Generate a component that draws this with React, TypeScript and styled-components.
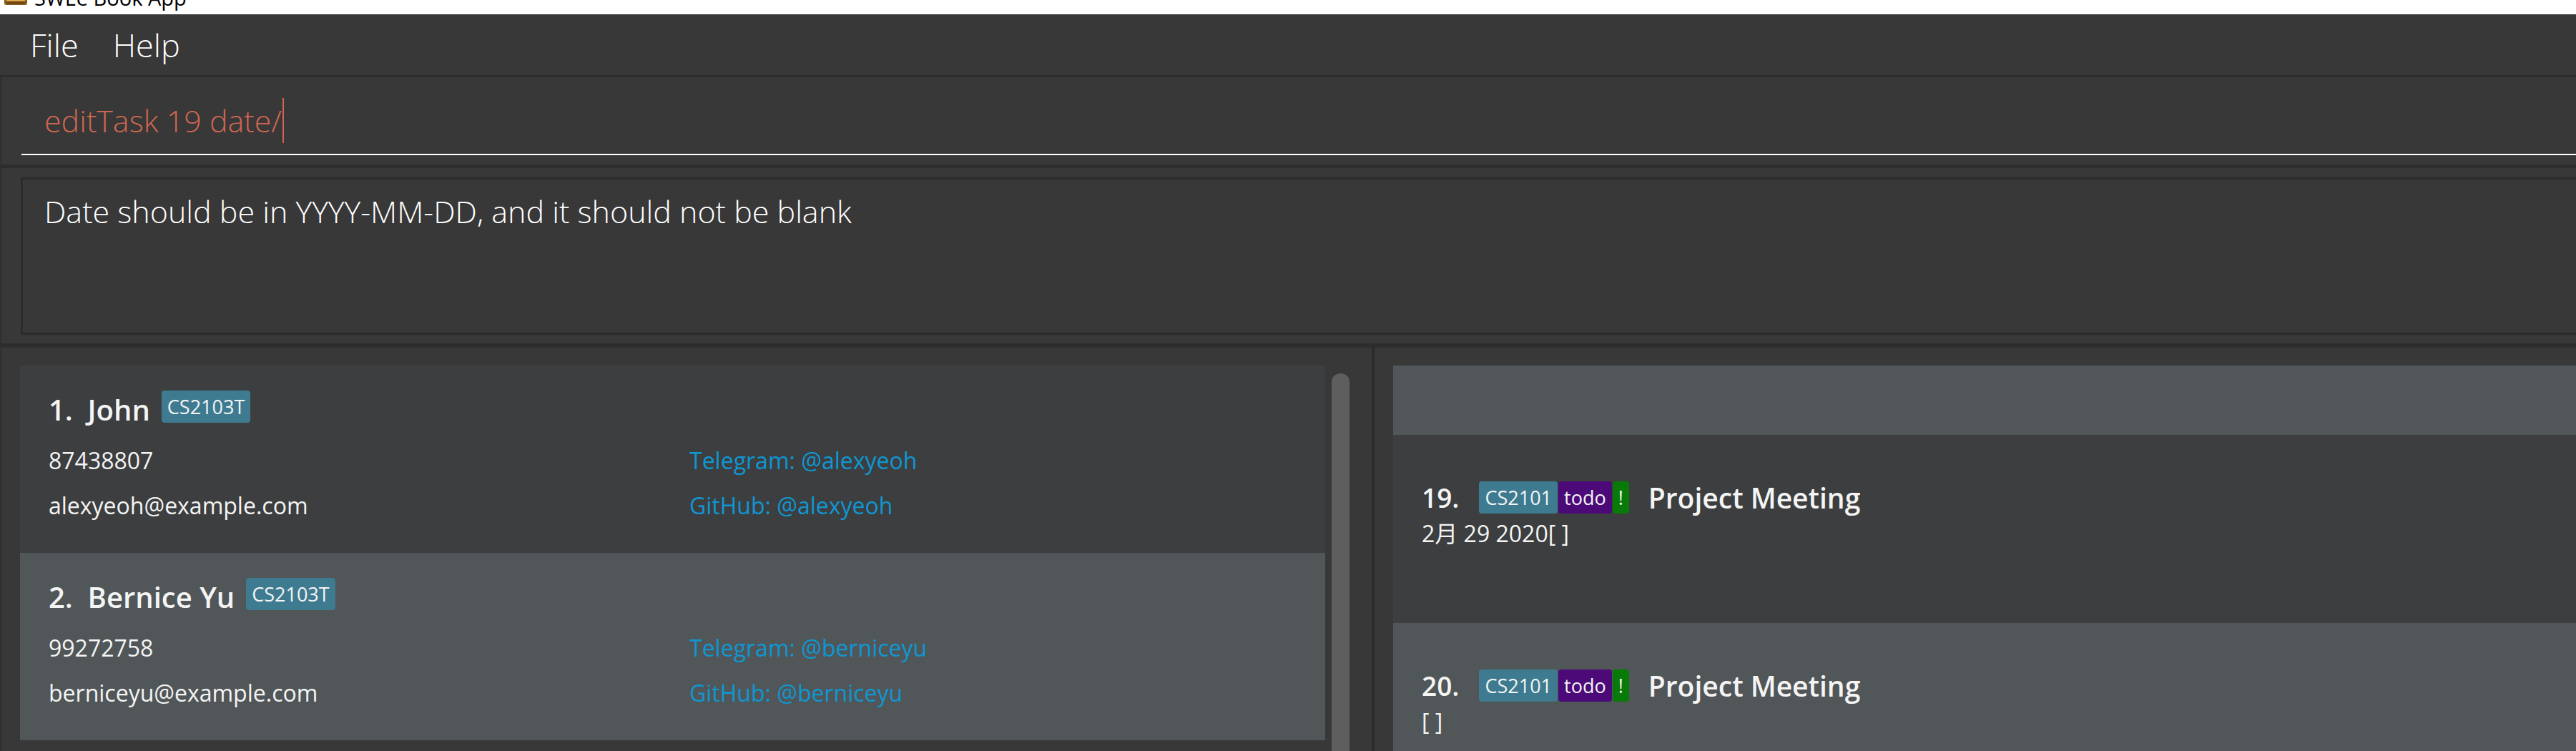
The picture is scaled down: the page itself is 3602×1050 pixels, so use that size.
import React from "react";
import styled, { createGlobalStyle } from "styled-components";

const GlobalStyle = createGlobalStyle`
  html, body { margin: 0; padding: 0; }
  body {
    background: #383838;
    font-family: "Open Sans", "Noto Sans", "Noto Sans CJK SC", sans-serif;
    overflow: hidden;
  }
  * { box-sizing: border-box; }
`;

const Window = styled.div`
  width: 3602px;
  height: 1050px;
  display: flex;
  flex-direction: column;
  background: #383838;
  overflow: hidden;
`;

const TitleBar = styled.header`
  flex: 0 0 20px;
  background: #ffffff;
  display: flex;
  align-items: flex-start;
  gap: 9px;
  padding-left: 5px;
  overflow: hidden;
`;

const AppIcon = styled.svg`
  flex: 0 0 34px;
  margin-top: -26px;
`;

const WindowTitle = styled.span`
  font-family: "Open Sans", "Noto Sans", sans-serif;
  font-size: 29px;
  line-height: 30px;
  margin-top: -18px;
  color: #000;
  white-space: nowrap;
`;

const MenuBar = styled.nav`
  flex: 0 0 85px;
  display: flex;
  align-items: center;
  gap: 48px;
  padding-left: 42px;
  background: #383838;
`;

const MenuItem = styled.span`
  font-weight: 300;
  font-size: 45px;
  color: #ffffff;
`;

const Rule = styled.div<{ $h: number }>`
  flex: 0 0 ${(p) => p.$h}px;
  background: #2d2d2d;
`;

const CommandPane = styled.section`
  flex: 0 0 122px;
  padding: 29px 0 0 27px;
  border-left: 3px solid #313131;
`;

const CommandField = styled.div`
  display: flex;
  align-items: center;
  padding: 0 0 15px 32px;
  border-bottom: 2px solid #ffffff;
`;

const CommandText = styled.span`
  font-weight: 300;
  font-size: 43px;
  line-height: 63px;
  color: #d06651;
  white-space: pre;
`;

const Caret = styled.span`
  width: 2px;
  height: 63px;
  margin-left: 1px;
  background: #d06651;
`;

const ResultPane = styled.section`
  flex: 0 0 245px;
  padding: 13px 0 12px 26px;
  border-left: 3px solid #313131;
`;

const ResultBox = styled.div`
  height: 220px;
  border: 3px solid #2b2b2b;
  border-right: none;
  padding: 18px 0 0 30px;
  font-weight: 300;
  font-size: 43px;
  line-height: 54px;
  color: #ffffff;
`;

const Lists = styled.main`
  flex: 1;
  display: flex;
  min-height: 0;
`;

const LeftPanel = styled.section`
  flex: 0 0 1918px;
  display: flex;
  gap: 9px;
  padding: 25px 31px 0 25px;
  border-left: 3px solid #313131;
`;

const CardList = styled.div`
  flex: 0 0 1825px;
  display: flex;
  flex-direction: column;
`;

const PersonCard = styled.article<{ $odd: boolean }>`
  flex: 0 0 262px;
  background: ${(p) => (p.$odd ? "#515658" : "#3c3e3f")};
  padding: 32px 0 0 40px;
  display: flex;
  flex-direction: column;
`;

const NameRow = styled.div`
  display: flex;
  align-items: center;
  height: 58px;
`;

const BigLabel = styled.span<{ $size: number }>`
  font-weight: 600;
  font-size: ${(p) => p.$size}px;
  color: #f4f4f4;
  white-space: pre;
`;

const Tag = styled.span<{ $kind: "module" | "status" | "priority" }>`
  display: inline-flex;
  align-items: center;
  height: 45px;
  padding: 0 8px;
  border-radius: 4px;
  font-size: 27px;
  color: #f4f4f4;
  background: ${(p) =>
    p.$kind === "module" ? "#3e7b91" : p.$kind === "status" ? "#4b0a78" : "#077a07"};
`;

const PersonTag = styled(Tag)`
  margin-left: 16px;
  margin-top: -7px;
`;

const Details = styled.div`
  display: grid;
  grid-template-columns: 896px auto;
  margin-top: 11px;
  font-size: 32px;
  line-height: 63px;
`;

const Field = styled.span`
  color: #f4f4f4;
`;

const Link = styled.span`
  color: #0f97d3;
`;

const ScrollThumb = styled.div`
  flex: 0 0 25px;
  margin-top: 11px;
  border-radius: 12px 12px 0 0;
  background: #5e5e5e;
`;

const VDivider = styled.div`
  flex: 0 0 4px;
  background: #2b2b2b;
`;

const RightPanel = styled.section`
  flex: 1;
  min-width: 0;
  display: flex;
  flex-direction: column;
  padding: 25px 0 0 26px;
`;

const TaskViewport = styled.div`
  flex: 1;
  overflow: hidden;
`;

const TaskList = styled.div<{ $scroll: number }>`
  display: flex;
  flex-direction: column;
  margin-top: -${(p) => p.$scroll}px;
`;

const TaskCard = styled.article<{ $odd: boolean }>`
  flex: 0 0 263px;
  height: 263px;
  background: ${(p) => (p.$odd ? "#515658" : "#3c3e3f")};
  padding: 62px 0 0 40px;
`;

const TitleRow = styled.div`
  display: flex;
  align-items: center;
  height: 50px;
`;

const TagGroup = styled.div`
  display: flex;
  gap: 1px;
  margin: 0 27px 0 28px;
`;

const DateRow = styled.div`
  margin-top: 3px;
  font-size: 32px;
  line-height: 45px;
  color: #f4f4f4;
  white-space: pre;
  font-family: "Open Sans", "Noto Sans CJK SC", sans-serif;
`;

const persons = [
  { name: "John", tag: "CS2103T", phone: "87438807", email: "alexyeoh@example.com", tele: "@alexyeoh", gh: "@alexyeoh" },
  { name: "Bernice Yu", tag: "CS2103T", phone: "99272758", email: "berniceyu@example.com", tele: "@berniceyu", gh: "@berniceyu" },
];

const tasks = [
  { idx: 18, title: "Project Meeting", date: "" },
  { idx: 19, title: "Project Meeting", date: "2月 29 2020" },
  { idx: 20, title: "Project Meeting", date: "" },
];

export default function App() {
  return (
    <Window>
      <GlobalStyle />
      <TitleBar>
        <AppIcon width="34" height="34" viewBox="0 0 34 34">
          <rect x="1" y="1" width="32" height="32" rx="3" fill="#8a5a1c" />
          <rect x="4" y="3" width="26" height="27" rx="2" fill="#e0a94a" />
          <rect x="4" y="28" width="26" height="3" fill="#6b4312" />
        </AppIcon>
        <WindowTitle>SWEe Book App</WindowTitle>
      </TitleBar>
      <MenuBar>
        <MenuItem>File</MenuItem>
        <MenuItem>Help</MenuItem>
      </MenuBar>
      <Rule $h={3} />
      <CommandPane>
        <CommandField>
          <CommandText>editTask 19 date/</CommandText>
          <Caret />
        </CommandField>
      </CommandPane>
      <Rule $h={5} />
      <ResultPane>
        <ResultBox>Date should be in YYYY-MM-DD, and it should not be blank</ResultBox>
      </ResultPane>
      <Rule $h={6} />
      <Lists>
        <LeftPanel>
          <CardList>
            {persons.map((p, i) => (
              <PersonCard key={p.name} $odd={i % 2 === 1}>
                <NameRow>
                  <BigLabel $size={40}>{`${i + 1}.  ${p.name}`}</BigLabel>
                  <PersonTag $kind="module">{p.tag}</PersonTag>
                </NameRow>
                <Details>
                  <Field>{p.phone}</Field>
                  <Link>Telegram: {p.tele}</Link>
                  <Field>{p.email}</Field>
                  <Link>GitHub: {p.gh}</Link>
                </Details>
              </PersonCard>
            ))}
          </CardList>
          <ScrollThumb />
        </LeftPanel>
        <VDivider />
        <RightPanel>
          <TaskViewport>
            <TaskList $scroll={166}>
              {tasks.map((t) => (
                <TaskCard key={t.idx} $odd={t.idx % 2 === 0}>
                  <TitleRow>
                    <BigLabel $size={37}>{`${t.idx}.`}</BigLabel>
                    <TagGroup>
                      <Tag $kind="module">CS2101</Tag>
                      <Tag $kind="status">todo</Tag>
                      <Tag $kind="priority">!</Tag>
                    </TagGroup>
                    <BigLabel $size={39}>{t.title}</BigLabel>
                  </TitleRow>
                  <DateRow>{`${t.date}[ ]`}</DateRow>
                </TaskCard>
              ))}
            </TaskList>
          </TaskViewport>
        </RightPanel>
      </Lists>
    </Window>
  );
}
